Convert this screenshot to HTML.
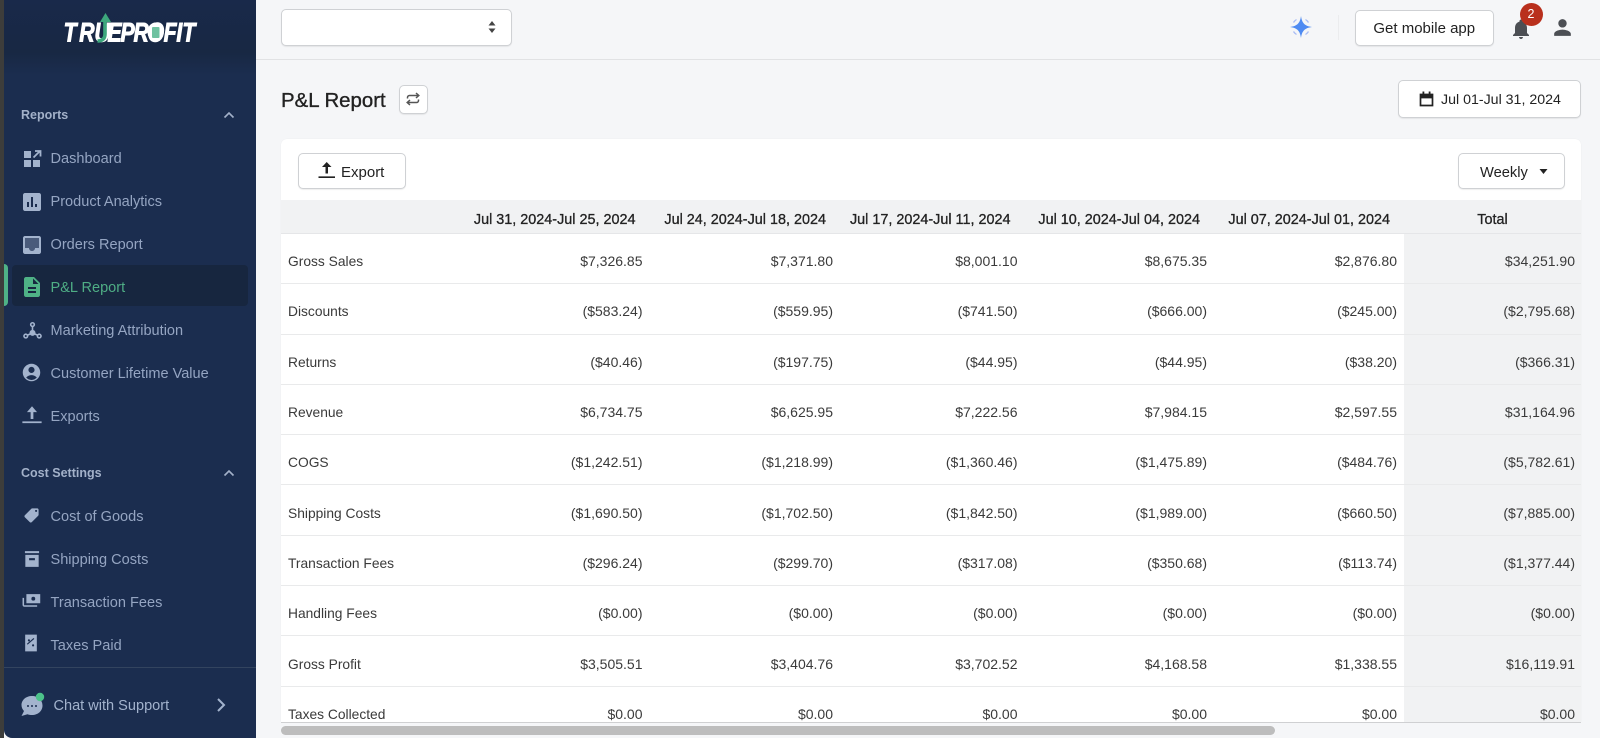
<!DOCTYPE html>
<html><head><meta charset="utf-8"><title>P&amp;L Report</title>
<style>
*{box-sizing:border-box}
html,body{margin:0;padding:0;width:1600px;height:738px;overflow:hidden;background:#f5f6f8;font-family:"Liberation Sans",sans-serif;color:#303030}
.abs{position:absolute}
#strip{left:0;top:0;width:4px;height:738px;background:#3d3d3b}
#side{left:4px;top:0;width:252px;height:738px;background:#1b2d4f;border-bottom-left-radius:8px}
#sidetop{left:4px;top:0;width:252px;height:75px;background:linear-gradient(#19294a 0,#182843 70%,#1b2d4f 100%)}
.sh{left:21px;font-size:12.5px;font-weight:bold;color:#a3b1c9;line-height:16px}
.it{left:50.5px;font-size:14.55px;color:#95a5c2;line-height:20px;white-space:nowrap}
.ic{left:20px;width:24px;height:24px;fill:#a3b3cd}
#act{left:12px;top:265px;width:236px;height:41px;background:#17263f;border-radius:4px}
#bar{left:4px;top:264px;width:4px;height:42px;background:#4fb286;border-radius:0 4px 4px 0}
.btn{background:#fff;border:1px solid #cfd1d4;border-radius:5px;box-shadow:0 1px 1px rgba(0,0,0,.07);color:#222;font-size:14.5px;line-height:20px;white-space:nowrap}
#topline{left:256px;top:59px;width:1344px;height:1px;background:#e1e2e4}
#card{left:281px;top:139px;width:1300px;height:583px;background:#fff;border-radius:6px 6px 0 0;overflow:hidden;box-shadow:0 0 1px rgba(0,0,0,.08)}
table{position:absolute;left:0;top:61px;width:1300px;border-collapse:separate;border-spacing:0;table-layout:fixed}
th{height:34px;background:#f1f2f3;font-size:14.4px;color:#222;font-weight:normal;-webkit-text-stroke:.3px #222;text-align:right;padding:6px 14px 0 0;border-bottom:1px solid #e5e6e8;white-space:nowrap}
td{height:50.3px;font-size:14px;color:#3a3a3a;text-align:right;padding:5px 7px 0 0;border-bottom:1px solid #e9eaeb;white-space:nowrap}
td:first-child{text-align:left;padding:6px 0 0 7px;font-size:13.8px}
th:last-child{text-align:center;padding:6px 0 0 0;background:#f1f2f3}
td:last-child{background:#f1f2f3;padding-right:6px}
#track{left:281px;top:722px;width:1300px;height:1px;background:#cfd0d2}
#thumb{left:281px;top:726px;width:994px;height:9px;border-radius:5px;background:#bdbdbd}
</style></head>
<body>
<div class="abs" id="strip"></div>
<div class="abs" id="side"></div>
<div class="abs" id="sidetop"></div>

<svg class="abs" style="left:53.500px;top:8px" width="150" height="42" viewBox="0 0 150 42">
<g transform="scale(.8 1)"><text x="12 31.500 50.600 66.900 83.100 99.400 117 137 153 160.500" y="33.700" font-family="Liberation Sans" font-weight="bold" font-style="italic" font-size="26.500" fill="#fff" stroke="#fff" stroke-width="1">TRUEPROFIT</text></g>
<path d="M43.500 33C48 33 51 31 51 26V12" fill="none" stroke="#3da77c" stroke-width="3.600"/>
<path d="M51.500 5L46 14H57Z" fill="#3da77c"/>
<ellipse cx="101.500" cy="24" rx="8" ry="9.500" fill="#fff"/>
<rect x="98" y="19" width="7.500" height="11" rx="1" fill="#6fc2a0"/>
</svg>

<div class="abs sh" style="top:107px">Reports</div>
<svg class="abs" style="left:222px;top:108px" width="14" height="14" viewBox="0 0 14 14"><path d="M2.500 9.500L7 5l4.500 4.500" fill="none" stroke="#a3b1c9" stroke-width="1.600"/></svg>

<svg class="abs ic" style="top:147px" viewBox="0 0 24 24"><path d="M4 4h7v7H4zM4 13h7v7H4zM13 13h7v7h-7z"/><path d="M13.500 10.500L20 4M15 4h5.500v5.500" fill="none" stroke="#a3b3cd" stroke-width="1.800"/></svg>
<div class="abs it" style="top:149px">Dashboard</div>
<svg class="abs ic" style="top:190px" viewBox="0 0 24 24"><path d="M19 3H5c-1.100 0-2 .9-2 2v14c0 1.100.9 2 2 2h14c1.100 0 2-.9 2-2V5c0-1.100-.9-2-2-2zM9 17H7v-5h2v5zm4 0h-2V7h2v10zm4 0h-2v-3h2v3z"/></svg>
<div class="abs it" style="top:192px">Product Analytics</div>
<svg class="abs ic" style="top:233px" viewBox="0 0 24 24"><path d="M19 3H5c-1.100 0-2 .9-2 2v14c0 1.100.9 2 2 2h14c1.100 0 2-.9 2-2V5c0-1.100-.9-2-2-2zm0 12h-4c0 1.660-1.350 3-3 3s-3-1.340-3-3H5V5h14v10z"/><path d="M5 5h14v10h-4c0 1.660-1.350 3-3 3s-3-1.340-3-3H5z" opacity=".35"/></svg>
<div class="abs it" style="top:235px">Orders Report</div>
<div class="abs" id="act"></div>
<div class="abs" id="bar"></div>
<svg class="abs ic" style="top:275px;fill:#4fb286" viewBox="0 0 24 24"><path d="M14 2H6c-1.100 0-1.990.9-1.990 2L4 20c0 1.100.89 2 1.990 2H18c1.100 0 2-.9 2-2V8l-6-6zm2 16H8v-2h8v2zm0-4H8v-2h8v2zm-3-5V3.500L18.500 9H13z"/></svg>
<div class="abs it" style="top:278px;color:#4fae85">P&amp;L Report</div>
<svg class="abs ic" style="top:321px;left:22.500px;width:19px;height:19px" viewBox="0 0 24 24"><circle cx="12" cy="4.500" r="2.300" fill="none" stroke="#a3b3cd" stroke-width="2"/><circle cx="3.500" cy="19" r="2.300" fill="none" stroke="#a3b3cd" stroke-width="2"/><circle cx="20.500" cy="19" r="2.300" fill="none" stroke="#a3b3cd" stroke-width="2"/><circle cx="12" cy="15" r="3.800"/><path d="M12 7v8M5.500 18L12 15l6.500 3" stroke="#a3b3cd" stroke-width="2" fill="none"/></svg>
<div class="abs it" style="top:321px">Marketing Attribution</div>
<svg class="abs ic" style="top:362px;width:21px;height:21px;left:21px" viewBox="0 0 24 24"><path d="M12 2C6.480 2 2 6.480 2 12s4.480 10 10 10 10-4.480 10-10S17.520 2 12 2zm0 3.500c1.930 0 3.500 1.570 3.500 3.500s-1.570 3.500-3.500 3.500-3.500-1.570-3.500-3.500 1.570-3.500 3.500-3.500zm0 15c-2.300 0-4.500-1-6.100-2.800C7.500 15.900 9.700 15 12 15s4.500.9 6.100 2.700c-1.600 1.800-3.800 2.800-6.100 2.800z"/></svg>
<div class="abs it" style="top:363.500px">Customer Lifetime Value</div>
<svg class="abs ic" style="top:403px;left:21px;width:22px;height:22px" viewBox="0 0 24 24"><path d="M1.500 22h21v-2h-21zM12 3.500L6.500 10h4v7.500h3V10h4z"/></svg>
<div class="abs it" style="top:406.500px">Exports</div>

<div class="abs sh" style="top:465px">Cost Settings</div>
<svg class="abs" style="left:222px;top:466px" width="14" height="14" viewBox="0 0 14 14"><path d="M2.500 9.500L7 5l4.500 4.500" fill="none" stroke="#a3b1c9" stroke-width="1.600"/></svg>

<svg class="abs ic" style="top:507px;left:23px;width:17px;height:17px" viewBox="0 0 24 24"><g transform="matrix(-1 0 0 1 24 0)"><path d="M21.410 11.580l-9-9C12.050 2.220 11.550 2 11 2H4c-1.100 0-2 .9-2 2v7c0 .55.22 1.050.59 1.420l9 9c.36.36.86.58 1.410.58.55 0 1.050-.22 1.410-.59l7-7c.37-.36.59-.86.59-1.410 0-.55-.23-1.060-.59-1.420zM5.500 7C4.670 7 4 6.330 4 5.500S4.670 4 5.500 4 7 4.670 7 5.500 6.330 7 5.500 7z"/></g></svg>
<div class="abs it" style="top:507px">Cost of Goods</div>
<svg class="abs ic" style="top:549px;left:22px;width:20px;height:20px" viewBox="0 0 24 24"><path d="M3.500 2.500h17v2.500h-17zM4 7h16v14.500H4zm4.500 4v2.500h7V11z" fill-rule="evenodd"/></svg>
<div class="abs it" style="top:550px">Shipping Costs</div>
<svg class="abs ic" style="top:591px;width:20px;height:20px;left:21px" viewBox="0 0 26 24"><path d="M7 3h18v12H7zm9 3.500a2.500 2.500 0 100 5 2.500 2.500 0 000-5z" fill-rule="evenodd"/><path d="M2 8v9c0 1.500 1 2.500 2.500 2.500H21v-2H4V8z"/></svg>
<div class="abs it" style="top:593px">Transaction Fees</div>
<svg class="abs ic" style="top:633px;left:21px;width:20px;height:20px" viewBox="0 0 24 24"><path d="M5 2h14v20H5zm3 12l8-7-1-1-8 7zm1.500-6.500a1.300 1.300 0 100 2.600 1.300 1.300 0 000-2.600zm5 6a1.300 1.300 0 100 2.600 1.300 1.300 0 000-2.600z" fill-rule="evenodd"/></svg>
<div class="abs it" style="top:636px">Taxes Paid</div>

<div class="abs" style="left:4px;top:667px;width:252px;height:1px;background:#33445f"></div>
<svg class="abs" style="left:20px;top:692px" width="26" height="26" viewBox="0 0 26 26"><path d="M12 4C6 4 1.500 8 1.500 13c0 2.500 1 4.500 2.500 6L1.500 24l6-1.800c1.400.5 3 .8 4.500.8 6 0 10.500-4 10.500-9.500S18 4 12 4z" fill="#a3b3cd"/><circle cx="8" cy="14" r="1" fill="#1b2d4f"/><circle cx="12" cy="14" r="1" fill="#1b2d4f"/><circle cx="16" cy="14" r="1" fill="#1b2d4f"/><circle cx="20" cy="5" r="4.200" fill="#4cc28a"/></svg>
<div class="abs it" style="left:53.500px;top:696px;color:#a3b3cd">Chat with Support</div>
<svg class="abs" style="left:214px;top:696px" width="14" height="18" viewBox="0 0 14 18"><path d="M4 3l6 6-6 6" fill="none" stroke="#a3b3cd" stroke-width="2"/></svg>

<div class="abs" id="topline"></div>
<div class="abs btn" style="left:281px;top:8.500px;width:230.500px;height:37px"></div>
<svg class="abs" style="left:487px;top:20px" width="10" height="14" viewBox="0 0 10 14"><path d="M5 1l3.500 4.500h-7zM5 13L1.500 8.500h7z" fill="#444"/></svg>

<svg class="abs" style="left:1288px;top:14px" width="26" height="26" viewBox="0 0 26 26"><path d="M13 2c1 7 3.500 10 11 11-7.500 1-10 4-11 11-1-7-3.500-10-11-11 7.500-1 10-4 11-11z" fill="#4f8bf2"/><path d="M5.500 8.500A9 9 0 018.500 5.500M17.500 5.500a9 9 0 013 3M20.500 17.500a9 9 0 01-3 3M8.500 20.500a9 9 0 01-3-3" fill="none" stroke="#a9bdf5" stroke-width="1.300"/></svg>
<div class="abs" style="left:1338px;top:15px;width:1px;height:25px;background:#ebecee"></div>
<div class="abs btn" style="left:1355px;top:9.500px;width:138.500px;height:36px;text-align:center;line-height:36px;font-size:15px">Get mobile app</div>
<svg class="abs" style="left:1509px;top:17px" width="24" height="24" viewBox="0 0 24 24"><path d="M12 22c1.100 0 2-.9 2-2h-4c0 1.100.89 2 2 2zm6-6v-5c0-3.070-1.640-5.640-4.500-6.320V4c0-.83-.67-1.500-1.500-1.500s-1.500.67-1.500 1.500v.68C7.630 5.360 6 7.920 6 11v5l-2 2v1h16v-1l-2-2z" fill="#4c4f54"/></svg>
<div class="abs" style="left:1519.500px;top:3px;width:23px;height:23px;border-radius:50%;background:#b9301d;color:#fff;font-size:12.500px;line-height:23px;text-align:center">2</div>
<svg class="abs" style="left:1550px;top:15px" width="25" height="25" viewBox="0 0 24 24"><path d="M12 12c2.210 0 4-1.790 4-4s-1.790-4-4-4-4 1.790-4 4 1.790 4 4 4zm0 2c-2.670 0-8 1.340-8 4v2h16v-2c0-2.660-5.330-4-8-4z" fill="#4c4f54"/></svg>

<div class="abs" style="left:281px;top:88.500px;font-size:20.400px;line-height:24px;color:#222;-webkit-text-stroke:.35px #222;white-space:nowrap">P&amp;L Report</div>
<div class="abs btn" style="left:399px;top:85px;width:28.500px;height:29px"></div>
<svg class="abs" style="left:404px;top:90px" width="18" height="18" viewBox="0 0 18 18"><path d="M3.500 8.500V7.500a2 2 0 012-2H14.500M12 3l2.800 2.500L12 8M14.500 9.500v1a2 2 0 01-2 2H3.500M6 10L3.200 12.500 6 15" fill="none" stroke="#555" stroke-width="1.500"/></svg>

<div class="abs btn" style="left:1398px;top:80px;width:183px;height:38px;padding:0 0 0 42px;line-height:38px;font-size:14.200px">Jul 01-Jul 31, 2024</div>
<svg class="abs" style="left:1418px;top:90px" width="17" height="18" viewBox="0 0 17 18"><path d="M2.500 4.500h12v11h-12zM2.500 7.500h12" fill="none" stroke="#222" stroke-width="1.700"/><path d="M4.500 1.500h1.800v3H4.500zM10.700 1.500h1.800v3h-1.800zM2 4h13v3H2z" fill="#222"/></svg>

<div class="abs" id="card">
<table>
<colgroup><col style="width:178.500px"><col style="width:190px"><col style="width:190.500px"><col style="width:184.500px"><col style="width:189.500px"><col style="width:190px"><col style="width:177px"></colgroup>
<tr><th></th><th>Jul 31, 2024-Jul 25, 2024</th><th>Jul 24, 2024-Jul 18, 2024</th><th>Jul 17, 2024-Jul 11, 2024</th><th>Jul 10, 2024-Jul 04, 2024</th><th>Jul 07, 2024-Jul 01, 2024</th><th>Total</th></tr>
<tr><td>Gross Sales</td><td>$7,326.85</td><td>$7,371.80</td><td>$8,001.10</td><td>$8,675.35</td><td>$2,876.80</td><td>$34,251.90</td></tr>
<tr><td>Discounts</td><td>($583.24)</td><td>($559.95)</td><td>($741.50)</td><td>($666.00)</td><td>($245.00)</td><td>($2,795.68)</td></tr>
<tr><td>Returns</td><td>($40.46)</td><td>($197.75)</td><td>($44.95)</td><td>($44.95)</td><td>($38.20)</td><td>($366.31)</td></tr>
<tr><td>Revenue</td><td>$6,734.75</td><td>$6,625.95</td><td>$7,222.56</td><td>$7,984.15</td><td>$2,597.55</td><td>$31,164.96</td></tr>
<tr><td>COGS</td><td>($1,242.51)</td><td>($1,218.99)</td><td>($1,360.46)</td><td>($1,475.89)</td><td>($484.76)</td><td>($5,782.61)</td></tr>
<tr><td>Shipping Costs</td><td>($1,690.50)</td><td>($1,702.50)</td><td>($1,842.50)</td><td>($1,989.00)</td><td>($660.50)</td><td>($7,885.00)</td></tr>
<tr><td>Transaction Fees</td><td>($296.24)</td><td>($299.70)</td><td>($317.08)</td><td>($350.68)</td><td>($113.74)</td><td>($1,377.44)</td></tr>
<tr><td>Handling Fees</td><td>($0.00)</td><td>($0.00)</td><td>($0.00)</td><td>($0.00)</td><td>($0.00)</td><td>($0.00)</td></tr>
<tr><td>Gross Profit</td><td>$3,505.51</td><td>$3,404.76</td><td>$3,702.52</td><td>$4,168.58</td><td>$1,338.55</td><td>$16,119.91</td></tr>
<tr><td>Taxes Collected</td><td>$0.00</td><td>$0.00</td><td>$0.00</td><td>$0.00</td><td>$0.00</td><td>$0.00</td></tr>
</table>
<div class="abs btn" style="left:17px;top:13.500px;width:108px;height:36px;padding-left:42px;line-height:37px;font-size:15px">Export</div>
<svg class="abs" style="left:36px;top:21px" width="20" height="20" viewBox="0 0 20 20"><path d="M1.500 18h16.500v-1.600H1.500zM9.700 2L5 7h3.500v6.500h2.500V7h3.500z" fill="#222"/></svg>
<div class="abs btn" style="left:1177px;top:13.500px;width:106.500px;height:36px;padding-left:21px;line-height:38px;font-size:14.700px">Weekly</div>
<svg class="abs" style="left:1257px;top:29px" width="12" height="8" viewBox="0 0 12 8"><path d="M1.500 1h8L5.500 6z" fill="#222"/></svg>
</div>
<div class="abs" id="track"></div>
<div class="abs" id="thumb"></div>
</body></html>
